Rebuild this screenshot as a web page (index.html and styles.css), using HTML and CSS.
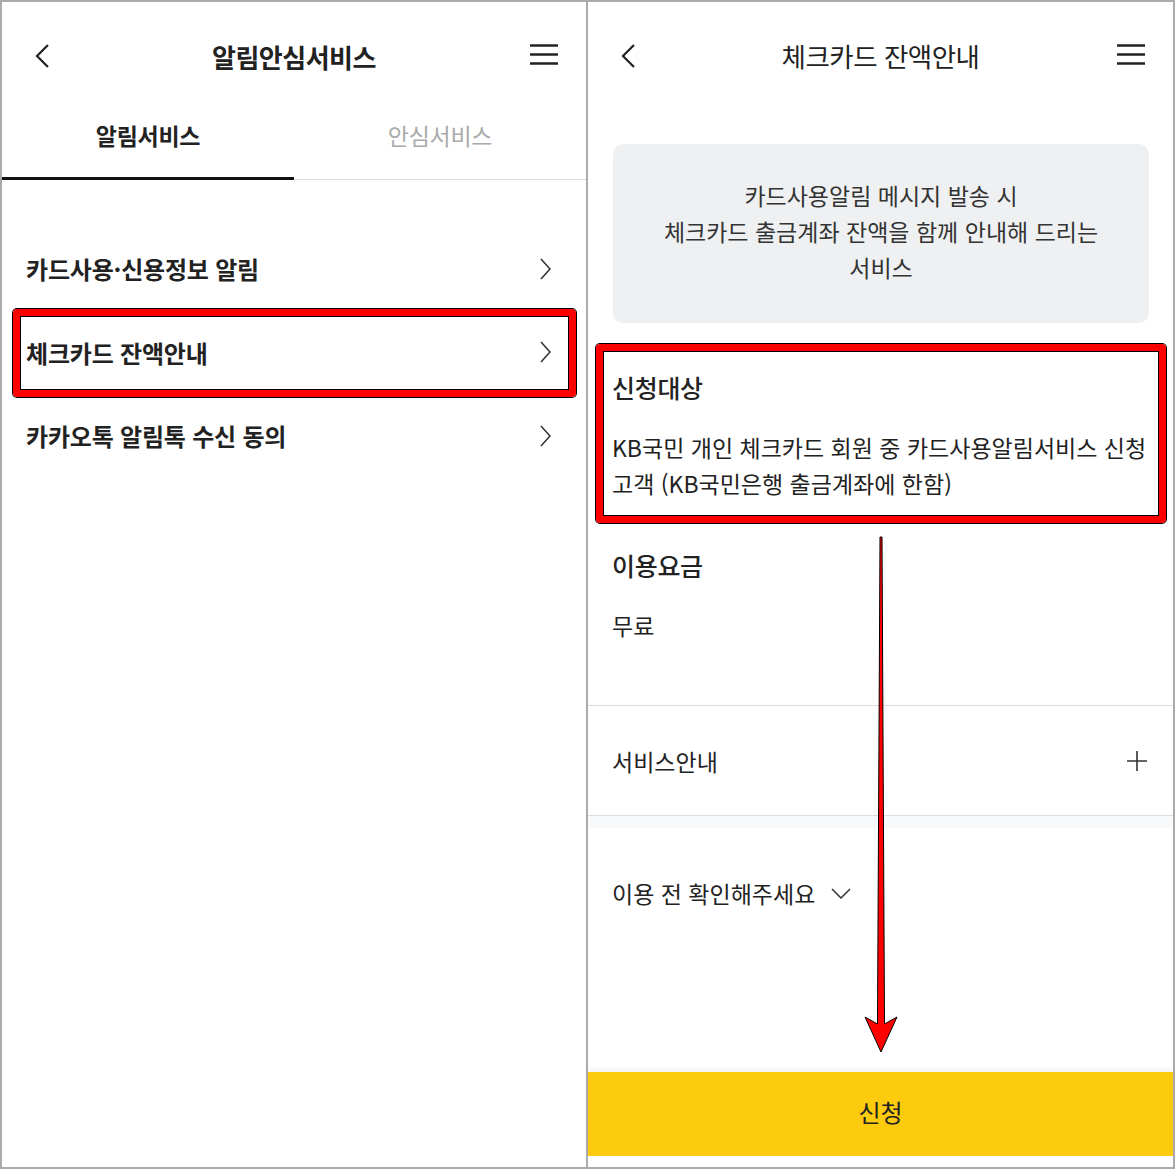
FILE: index.html
```html
<!DOCTYPE html>
<html lang="ko">
<head>
  <meta charset="UTF-8" />
  <meta name="viewport" content="width=device-width, initial-scale=1.0" />
  <title>알림안심서비스</title>
  <link rel="stylesheet" href="styles.css">
</head>
<body>

  <div class="frame">

    <!-- left screen: service menu -->
    <section class="screen screen-menu">
      <header class="topbar">
        <button class="icon-btn" aria-label="뒤로">
          <svg width="28" height="28" viewBox="0 0 28 28"><polyline points="18,3 7,14 18,25" fill="none" stroke="#222" stroke-width="2.2" /></svg>
        </button>
        <h1 class="topbar-title bold">알림안심서비스</h1>
        <button class="icon-btn menu-btn" aria-label="메뉴">
          <svg width="28" height="28" viewBox="0 0 28 28"><path d="M0 3.5H28M0 12.5H28M0 21.5H28" stroke="#222" stroke-width="2.6" /></svg>
        </button>
      </header>

      <nav class="tabs">
        <a class="tab active">알림서비스</a>
        <a class="tab">안심서비스</a>
      </nav>

      <ul class="menu-list">
        <li class="menu-item">
          <span>카드사용·신용정보 알림</span>
          <svg width="12" height="22" viewBox="0 0 12 22"><polyline points="2,1 11,11 2,21" fill="none" stroke="#333" stroke-width="1.6" /></svg>
        </li>
        <li class="menu-item marked">
          <span>체크카드 잔액안내</span>
          <svg width="12" height="22" viewBox="0 0 12 22"><polyline points="2,1 11,11 2,21" fill="none" stroke="#333" stroke-width="1.6" /></svg>
        </li>
        <li class="menu-item">
          <span>카카오톡 알림톡 수신 동의</span>
          <svg width="12" height="22" viewBox="0 0 12 22"><polyline points="2,1 11,11 2,21" fill="none" stroke="#333" stroke-width="1.6" /></svg>
        </li>
      </ul>
    </section>

    <!-- right screen: check card balance detail -->
    <section class="screen screen-detail">
      <header class="topbar">
        <button class="icon-btn" aria-label="뒤로">
          <svg width="28" height="28" viewBox="0 0 28 28"><polyline points="18,3 7,14 18,25" fill="none" stroke="#222" stroke-width="2.2" /></svg>
        </button>
        <h1 class="topbar-title">체크카드 잔액안내</h1>
        <button class="icon-btn menu-btn" aria-label="메뉴">
          <svg width="28" height="28" viewBox="0 0 28 28"><path d="M0 3.5H28M0 12.5H28M0 21.5H28" stroke="#222" stroke-width="2.6" /></svg>
        </button>
      </header>

      <div class="intro">카드사용알림 메시지 발송 시<br>체크카드 출금계좌 잔액을 함께 안내해 드리는<br>서비스</div>

      <div class="info marked">
        <h2>신청대상</h2>
        <p>KB국민 개인 체크카드 회원 중 카드사용알림서비스 신청<br>고객 (KB국민은행 출금계좌에 한함)</p>
      </div>

      <div class="info last">
        <h2>이용요금</h2>
        <p>무료</p>
      </div>

      <div class="fold">
        <span>서비스안내</span>
        <svg width="20" height="20" viewBox="0 0 20 20"><path d="M10 0V20M0 10H20" stroke="#333" stroke-width="1.6" /></svg>
      </div>
      <div class="band"></div>

      <div class="notice">
        <span>이용 전 확인해주세요</span>
        <svg width="20" height="11" viewBox="0 0 20 11"><polyline points="1,1 10,10 19,1" fill="none" stroke="#333" stroke-width="1.5" /></svg>
      </div>

      <div class="spacer"></div>
      <button class="apply">신청</button>

      <svg class="arrow" viewBox="0 0 585 1165">
        <polygon points="292,535 294,535 296.5,1022 309,1015 293,1050 277,1015 289.5,1022" fill="#f00" stroke="#000" stroke-width="1" />
      </svg>
    </section>

  </div>

</body>
</html>
```

FILE: styles.css
```css
* {
  box-sizing: border-box;
}
body {
  margin: 0;
  font-family: "Noto Sans CJK KR", "Noto Sans", sans-serif;
  color: #222;
  background: #fff;
}
.frame {
  display: flex;
  width: 1175px;
  height: 1169px;
  border: 2px solid #ababab;
}
.screen {
  position: relative;
  display: flex;
  flex-direction: column;
}
.screen-menu {
  width: 584px;
}
.screen-detail {
  width: 587px;
  border-left: 2px solid #ababab;
}

/* top bar */
.topbar {
  height: 108px;
  display: grid;
  grid-template-columns: 1fr auto 1fr;
  align-items: center;
  padding: 0 28px;
}
.icon-btn {
  display: flex;
  padding: 0;
  border: none;
  background: none;
}
.menu-btn {
  justify-self: end;
}
.topbar-title {
  margin: 0 0 1px;
  font-size: 26.5px;
  font-weight: 400;
  letter-spacing: -0.5px;
}
.topbar-title.bold {
  margin: 0;
  font-size: 26px;
  font-weight: 700;
}

/* tabs */
.tabs {
  display: grid;
  grid-template-columns: 1fr 1fr;
  border-bottom: 1px solid #dadada;
}
.tab {
  position: relative;
  padding: 11px 0 30px;
  text-align: center;
  font-size: 23px;
  line-height: 28px;
  color: #aaa;
  letter-spacing: -0.3px;
}
.tab.active {
  color: #222;
  font-weight: 700;
}
.tab.active::after {
  content: '';
  position: absolute;
  left: 0;
  right: 0;
  bottom: -1px;
  height: 3px;
  background: #111;
}

/* menu list */
.menu-list {
  list-style: none;
  margin: 0;
  padding: 47px 0 0;
}
.menu-item {
  position: relative;
  display: flex;
  align-items: center;
  justify-content: space-between;
  height: 83.5px;
  padding: 0 35px 0 24px;
  font-size: 24px;
  font-weight: 700;
  letter-spacing: -0.2px;
}

/* red highlight boxes drawn over the screenshot */
.marked::after {
  content: '';
  position: absolute;
  border: 7px solid #f00;
  border-radius: 4px;
  box-shadow: 0 0 0 1px #000, inset 0 0 0 1px #000;
  pointer-events: none;
}
.menu-item.marked::after {
  top: -2px;
  bottom: -3px;
  left: 11px;
  right: 10px;
}
.info.marked::after {
  top: 21px;
  bottom: -22px;
  left: 8px;
  right: 7px;
}

/* detail content */
.intro {
  margin: 34px 24px 0 25px;
  padding: 33px 10px 38px;
  background: #eef0f1;
  border-radius: 10px;
  text-align: center;
  font-size: 23px;
  line-height: 36px;
  color: #333;
}
.info {
  position: relative;
  padding: 48px 24px 0;
}
.info h2 {
  margin: 0 0 26px;
  font-size: 25px;
  line-height: 32px;
  font-weight: 500;
  letter-spacing: -0.3px;
}
.info p {
  margin: 0;
  font-size: 23px;
  line-height: 36px;
  white-space: nowrap;
}
.info.last {
  padding-bottom: 62px;
  border-bottom: 1px solid #dcdcdc;
}
.fold {
  display: flex;
  align-items: center;
  justify-content: space-between;
  height: 110px;
  padding: 0 26px 0 24px;
  font-size: 23px;
  border-bottom: 1px solid #dcdcdc;
}
.band {
  height: 12px;
  background: #f8f9fa;
}
.notice {
  display: flex;
  align-items: center;
  gap: 16px;
  padding: 50px 24px 0;
  font-size: 23px;
  line-height: 30px;
}
.spacer {
  flex: 1;
}
.apply {
  height: 84px;
  margin-bottom: 11px;
  border: none;
  background: #fdcb0d;
  font: inherit;
  font-size: 24px;
  line-height: 30px;
  padding: 0 0 4px;
  color: #222;
  box-shadow: 0 -3px 6px rgba(0, 0, 0, 0.06);
}
.arrow {
  position: absolute;
  top: 0;
  left: 0;
  width: 585px;
  height: 1165px;
  pointer-events: none;
}
```
